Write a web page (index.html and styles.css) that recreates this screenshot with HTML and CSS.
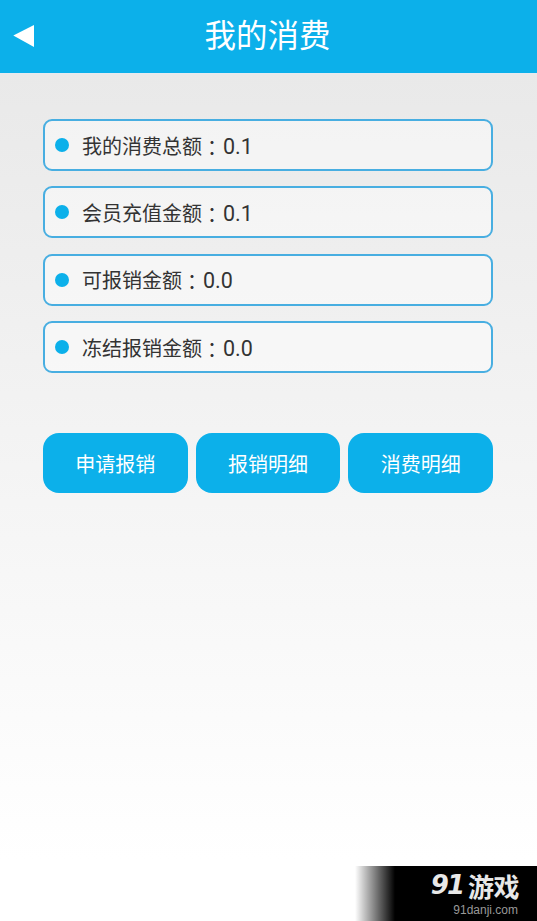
FILE: index.html
```html
<!DOCTYPE html>
<html lang="zh-CN">
<head>
    <meta charset="UTF-8">
    <title>我的消费</title>
    <link rel="stylesheet" href="styles.css">
</head>
<body>
    <div class="header">
        <svg class="back-icon" width="21" height="22" viewBox="0 0 21 22">
            <polygon points="0.3,10.5 21,0 21,22" fill="#ffffff"/>
        </svg>
        <h1 class="title">我的消费</h1>
    </div>

    <div class="content">
        <div class="info-list">
            <div class="info-row"><span class="dot"></span><span class="info-text">我的消费总额<span class="colon" lang="zh-TW">：</span><span class="value">0.1</span></span></div>
            <div class="info-row"><span class="dot"></span><span class="info-text">会员充值金额<span class="colon" lang="zh-TW">：</span><span class="value">0.1</span></span></div>
            <div class="info-row"><span class="dot"></span><span class="info-text">可报销金额<span class="colon" lang="zh-TW">：</span><span class="value">0.0</span></span></div>
            <div class="info-row"><span class="dot"></span><span class="info-text">冻结报销金额<span class="colon" lang="zh-TW">：</span><span class="value">0.0</span></span></div>
        </div>

        <div class="actions">
            <button class="action-button">申请报销</button>
            <button class="action-button">报销明细</button>
            <button class="action-button">消费明细</button>
        </div>
    </div>

    <div class="watermark">
        <div class="wm-logo"><span class="wm-num">91</span><span class="wm-name">游戏</span></div>
        <div class="wm-url">91danji.com</div>
    </div>
</body>
</html>
```

FILE: styles.css
```css
html, body {
    margin: 0;
    padding: 0;
    height: 100%;
}

body {
    position: relative;
    width: 537px;
    height: 921px;
    overflow: hidden;
    background: linear-gradient(#e9e9e9 73px, #ffffff 860px);
    font-family: Roboto, "Noto Sans CJK SC", sans-serif;
}

.header {
    display: flex;
    align-items: center;
    justify-content: center;
    position: relative;
    height: 73px;
    background: #0cb0ea;
    border-bottom: 1px solid #e6eaf0;
}

.back-icon {
    position: absolute;
    left: 13px;
    top: 25px;
}

.title {
    margin: -1px 2px 0 0;
    font-size: 31.5px;
    font-weight: 400;
    line-height: 73px;
    color: #ffffff;
}

.content {
    padding: 45px 44px 0 43px;
}

.info-list {
    display: flex;
    flex-direction: column;
    gap: 15.4px;
}

.info-row {
    display: flex;
    align-items: center;
    box-sizing: border-box;
    height: 52px;
    padding-left: 10px;
    background: rgba(255, 255, 255, 0.45);
    border: 2px solid #48aee1;
    border-radius: 9px;
}

.dot {
    width: 14px;
    height: 14px;
    border-radius: 50%;
    background: #0cb0ea;
}

.info-text {
    margin: 2px 0 0 13px;
    font-size: 20px;
    color: #333333;
}

.colon {
    font-family: "Noto Sans CJK TC", sans-serif;
    vertical-align: -2px;
}

.value {
    margin-left: 1px;
    font-size: 21.5px;
}

.actions {
    display: flex;
    gap: 8px;
    margin-top: 60px;
}

.action-button {
    flex: 1;
    height: 60px;
    padding: 0;
    background: #0cb0ea;
    border: none;
    border-radius: 16px;
    font-family: inherit;
    font-size: 20px;
    color: #ffffff;
}

.watermark {
    position: absolute;
    left: 355px;
    right: 0;
    top: 866px;
    bottom: 0;
    box-sizing: border-box;
    padding-right: 18px;
    text-align: right;
    background: linear-gradient(90deg, rgba(0, 0, 0, 0), #000000 40px);
}

.wm-logo {
    display: flex;
    align-items: center;
    justify-content: flex-end;
    height: 38px;
    color: #e8e8e8;
    font-weight: 700;
}

.wm-num {
    font-family: "DejaVu Sans", sans-serif;
    font-size: 26px;
    font-style: italic;
    letter-spacing: -2px;
    margin-right: 5px;
}

.wm-name {
    font-family: "Noto Sans CJK SC", sans-serif;
    font-size: 26px;
    letter-spacing: -0.5px;
}

.wm-url {
    font-family: "Liberation Sans", sans-serif;
    font-size: 12px;
    line-height: 13px;
    margin-right: 1px;
    color: #999999;
}
```
